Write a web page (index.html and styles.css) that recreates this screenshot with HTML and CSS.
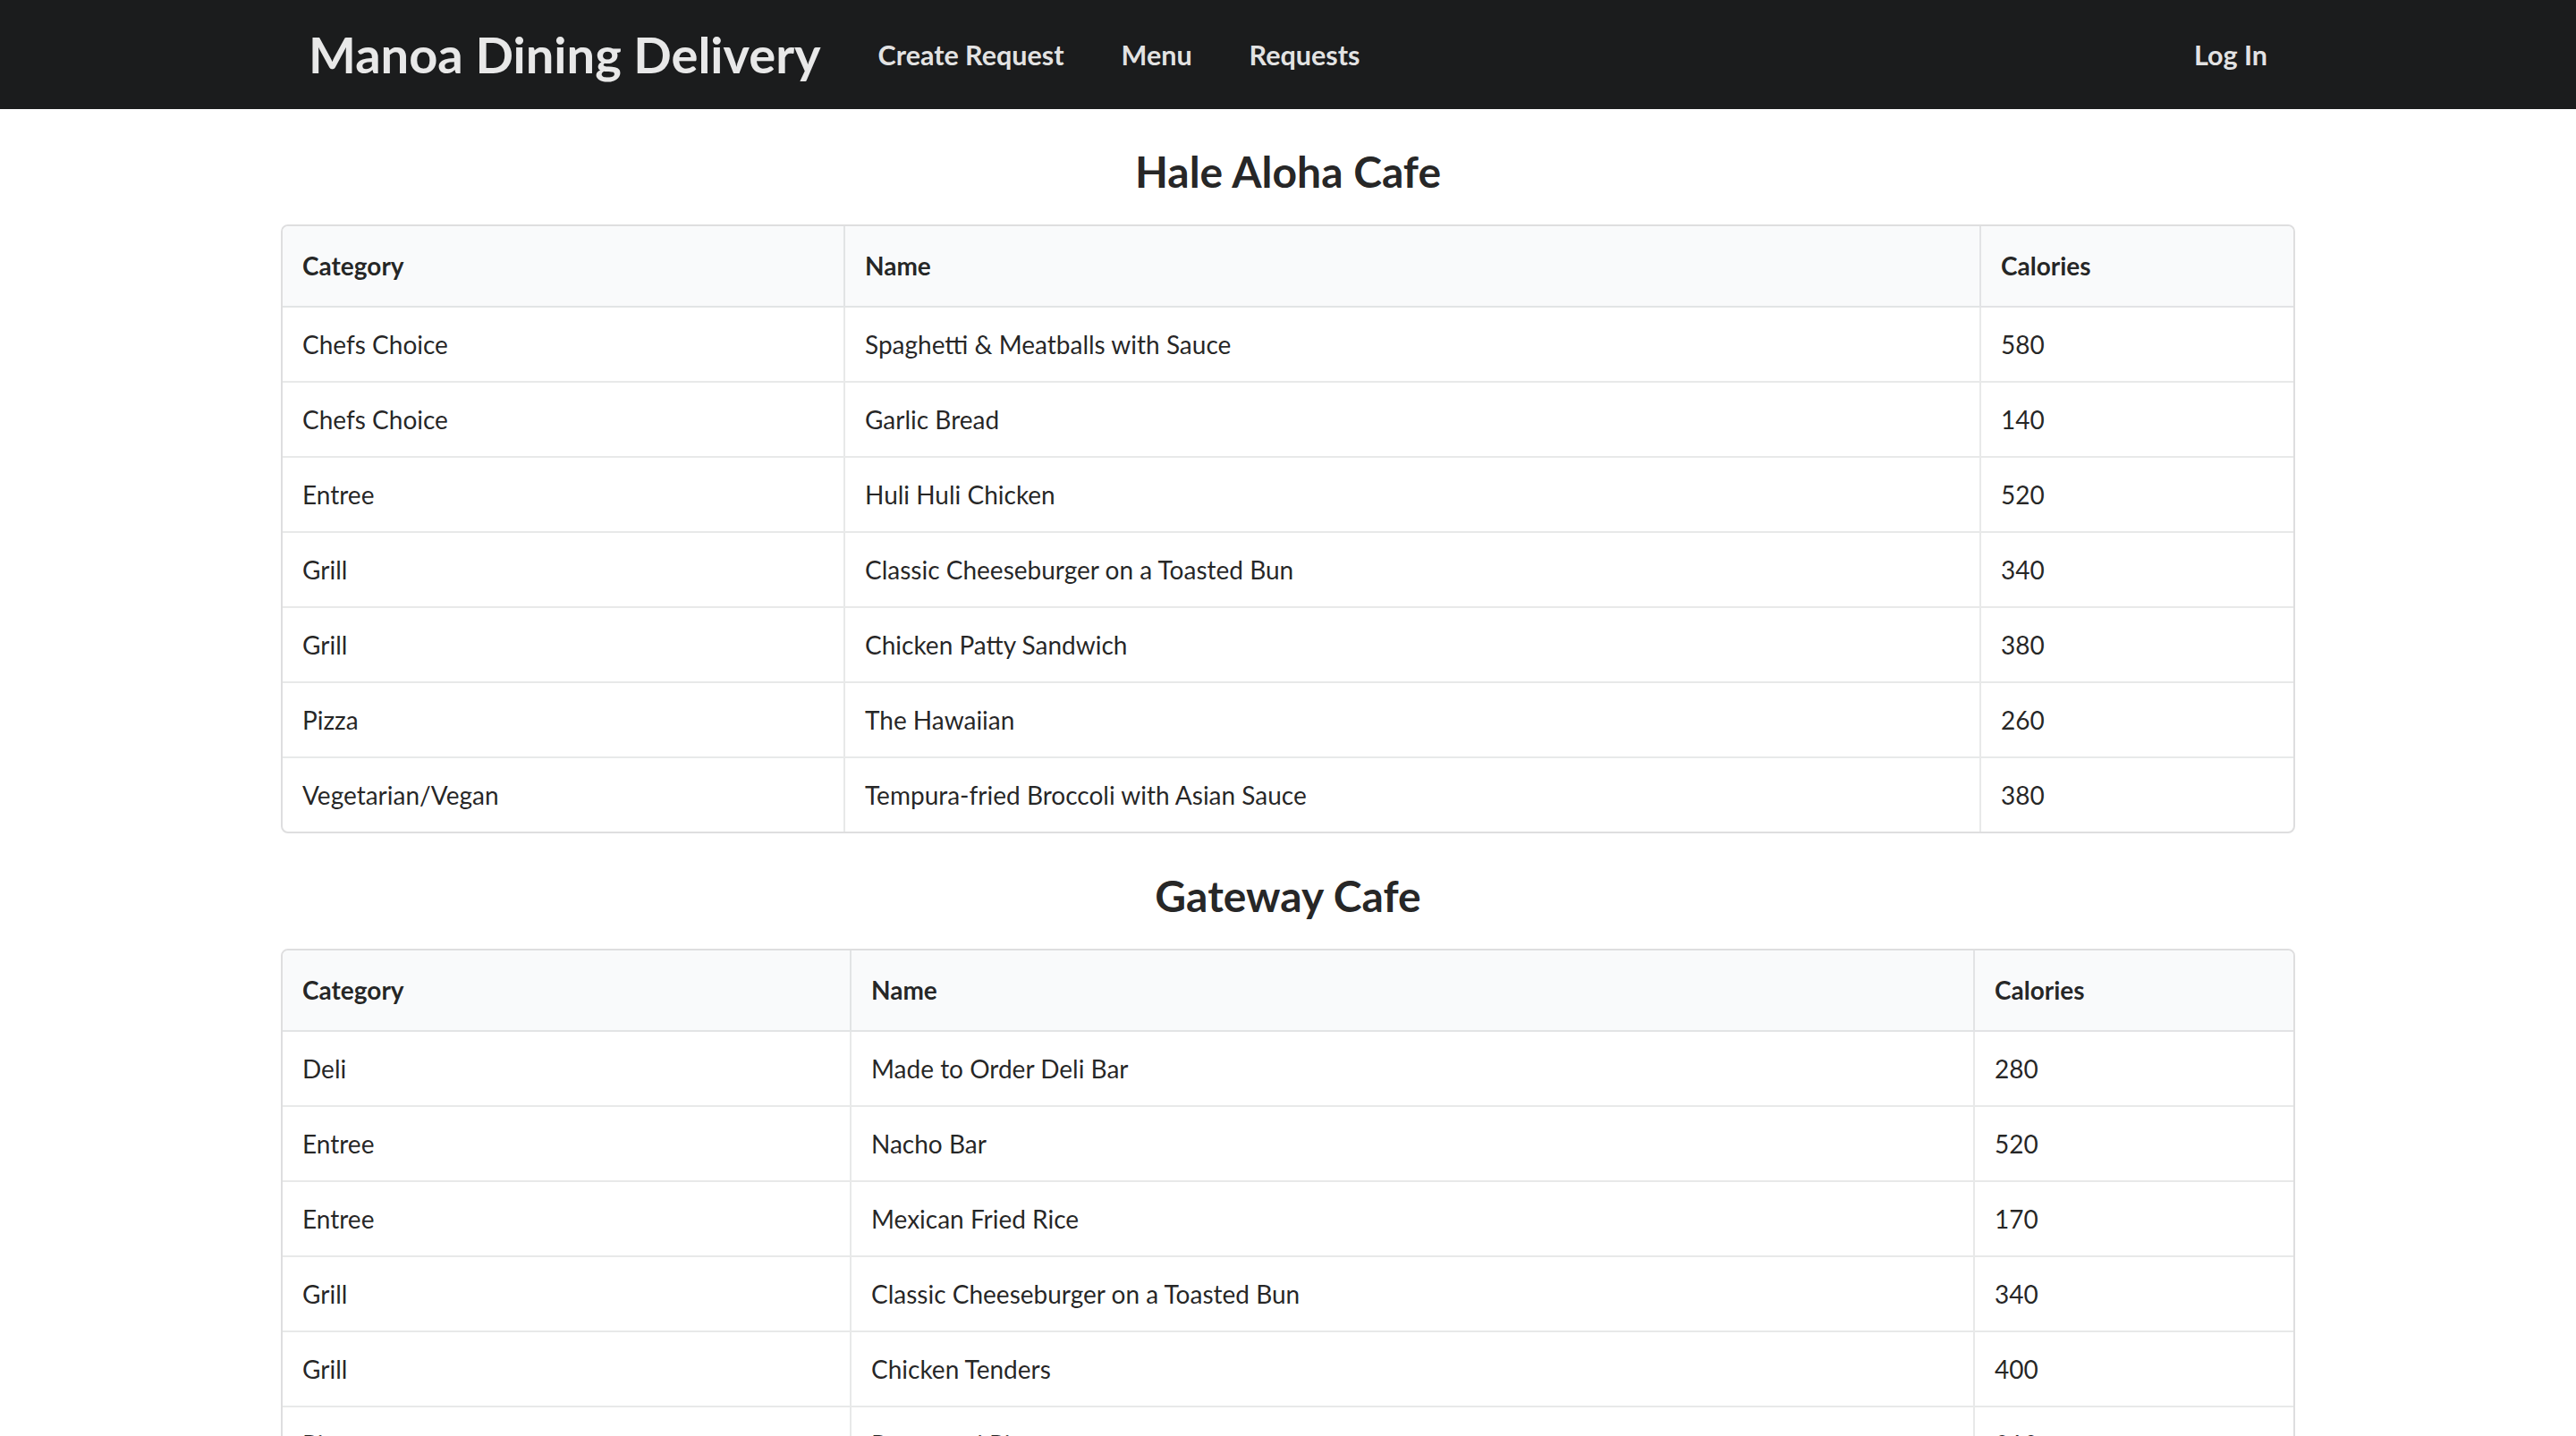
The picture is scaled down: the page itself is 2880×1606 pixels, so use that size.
FILE: index.html
```html
<!DOCTYPE html>
<html lang="en">
<head>
<meta charset="utf-8">
<title>Manoa Dining Delivery</title>
<link rel="stylesheet" href="styles.css">
</head>
<body>
<nav class="topbar">
  <div class="bar-inner">
    <a class="item brand">Manoa Dining Delivery</a>
    <a class="item">Create Request</a>
    <a class="item">Menu</a>
    <a class="item">Requests</a>
    <div class="right">
      <a class="item">Log In</a>
    </div>
  </div>
</nav>
<main class="container">
  <h2 class="cafe-title">Hale Aloha Cafe</h2>
  <table class="menu-table t1">
    <colgroup><col class="c1"><col class="c2"><col class="c3"></colgroup>
    <thead><tr><th>Category</th><th>Name</th><th>Calories</th></tr></thead>
    <tbody>
      <tr><td>Chefs Choice</td><td>Spaghetti &amp; Meatballs with Sauce</td><td>580</td></tr>
      <tr><td>Chefs Choice</td><td>Garlic Bread</td><td>140</td></tr>
      <tr><td>Entree</td><td>Huli Huli Chicken</td><td>520</td></tr>
      <tr><td>Grill</td><td>Classic Cheeseburger on a Toasted Bun</td><td>340</td></tr>
      <tr><td>Grill</td><td>Chicken Patty Sandwich</td><td>380</td></tr>
      <tr><td>Pizza</td><td>The Hawaiian</td><td>260</td></tr>
      <tr><td>Vegetarian/Vegan</td><td>Tempura-fried Broccoli with Asian Sauce</td><td>380</td></tr>
    </tbody>
  </table>
  <h2 class="cafe-title">Gateway Cafe</h2>
  <table class="menu-table t2">
    <colgroup><col class="c1"><col class="c2"><col class="c3"></colgroup>
    <thead><tr><th>Category</th><th>Name</th><th>Calories</th></tr></thead>
    <tbody>
      <tr><td>Deli</td><td>Made to Order Deli Bar</td><td>280</td></tr>
      <tr><td>Entree</td><td>Nacho Bar</td><td>520</td></tr>
      <tr><td>Entree</td><td>Mexican Fried Rice</td><td>170</td></tr>
      <tr><td>Grill</td><td>Classic Cheeseburger on a Toasted Bun</td><td>340</td></tr>
      <tr><td>Grill</td><td>Chicken Tenders</td><td>400</td></tr>
      <tr><td>Pizza</td><td>Pepperoni Pizza</td><td>310</td></tr>
    </tbody>
  </table>
</main>
</body>
</html>
```

FILE: styles.css
```css
html, body {
  margin: 0;
  padding: 0;
  background: #ffffff;
}

body {
  font-family: Lato, "Open Sans", "Helvetica Neue", Arial, sans-serif;
  font-size: 28px;
  line-height: 40px;
  color: rgba(0, 0, 0, 0.87);
}

.topbar {
  background: #1b1c1d;
  height: 122px;
}

.bar-inner {
  width: 2254px;
  height: 100%;
  margin: 0 auto;
  display: flex;
  align-items: stretch;
}

.item {
  display: flex;
  align-items: center;
  padding: 0 32px;
  color: rgba(255, 255, 255, 0.9);
  font-weight: 700;
  font-size: 30.5px;
  line-height: 1;
  text-decoration: none;
  white-space: nowrap;
}

.brand {
  font-size: 56px;
}

.right {
  margin-left: auto;
  display: flex;
}

.container {
  width: 2252px;
  margin: 0 auto;
}

.cafe-title {
  margin: 39px 0 28px;
  font-size: 48px;
  line-height: 62px;
  font-weight: 700;
  text-align: center;
  color: rgba(0, 0, 0, 0.87);
}

.menu-table + .cafe-title {
  margin-top: 39px;
}

.menu-table {
  width: 100%;
  table-layout: fixed;
  border-collapse: separate;
  border-spacing: 0;
  border: 2px solid rgba(34, 36, 38, 0.15);
  border-radius: 8px;
  margin: 0;
}

.menu-table th {
  background: #f9fafb;
  text-align: left;
  font-weight: 700;
  padding: 24px 22px 25px;
  border-bottom: 2px solid rgba(34, 36, 38, 0.1);
}

.menu-table th:first-child {
  border-top-left-radius: 6px;
}

.menu-table th:last-child {
  border-top-right-radius: 6px;
}

.menu-table td {
  padding: 21px 22px;
  text-align: left;
}

.menu-table tbody tr + tr td {
  border-top: 2px solid rgba(34, 36, 38, 0.1);
}

.menu-table th + th,
.menu-table td + td {
  border-left: 2px solid rgba(34, 36, 38, 0.1);
}

.t1 .c1 { width: 627px; }
.t1 .c2 { width: 1270px; }
.t2 .c1 { width: 634px; }
.t2 .c2 { width: 1256px; }
```
